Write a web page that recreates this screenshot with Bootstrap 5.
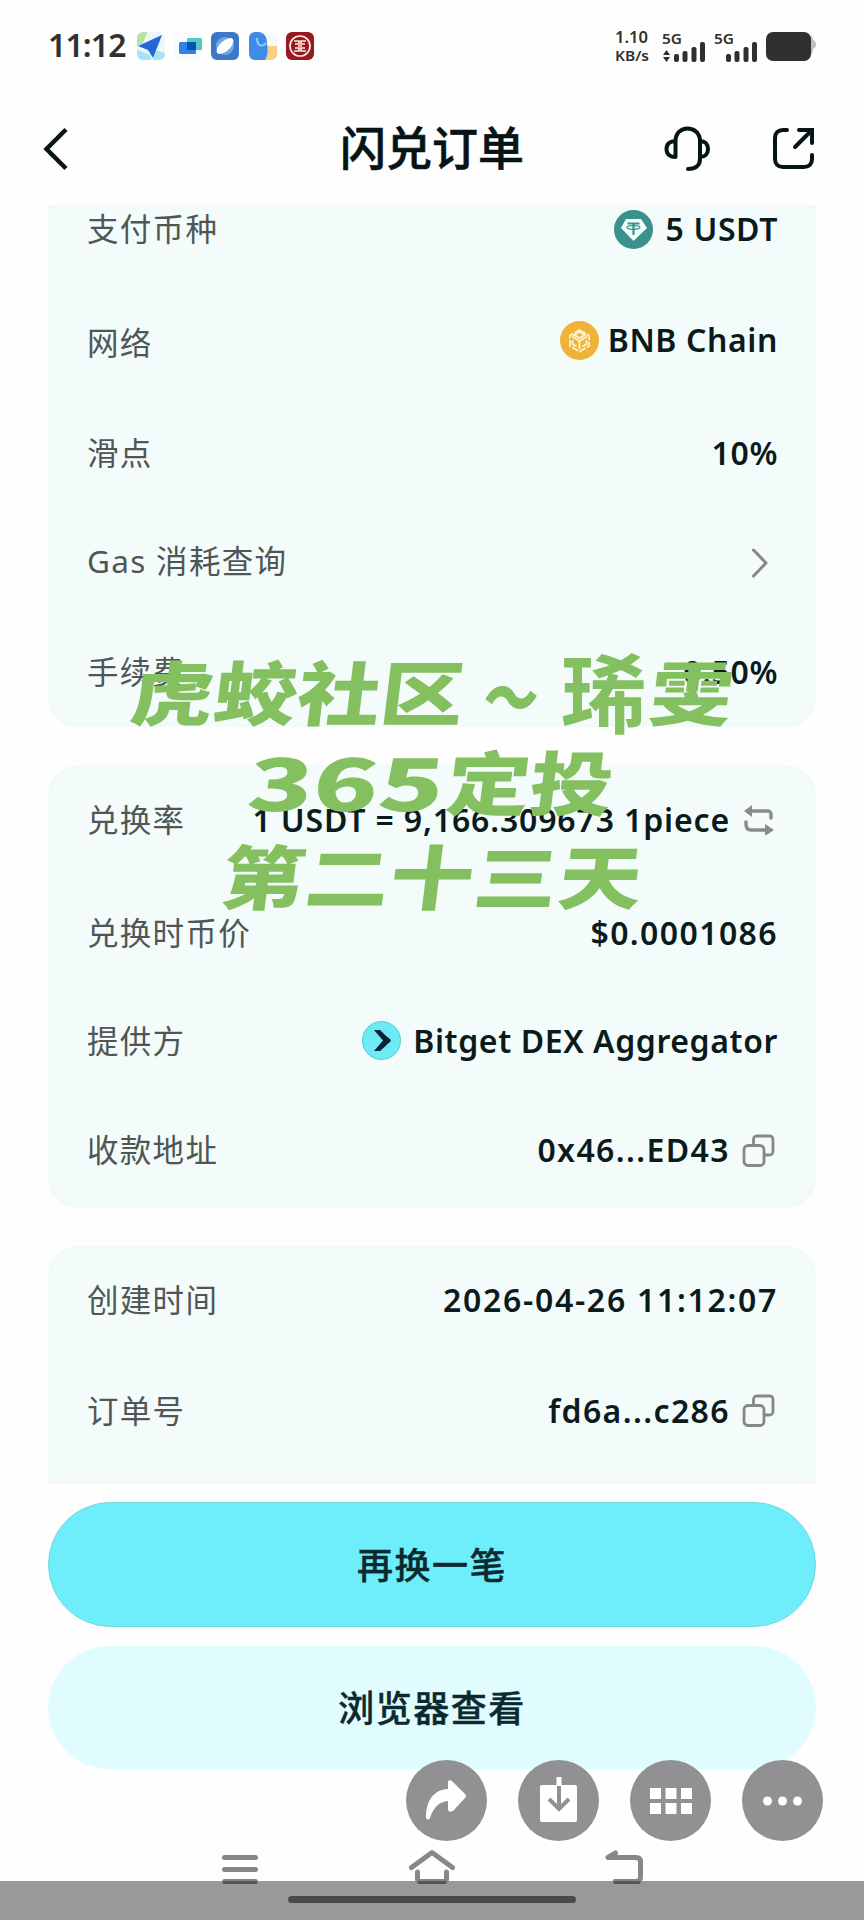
<!DOCTYPE html>
<html lang="zh-CN">
<head>
<meta charset="utf-8">
<meta name="viewport" content="width=device-width, initial-scale=1">
<title>闪兑订单</title>
<link rel="stylesheet" href="https://cdn.jsdelivr.net/npm/bootstrap@5.3.0/dist/css/bootstrap.min.css">
<style>
  body { width: 864px; height: 1920px; background: #fefefe; color: #0b1a1b; font-family: "Noto Sans", "Noto Sans CJK SC", sans-serif; overflow: hidden; }
  svg { display: block; flex-shrink: 0; }
  .status-bar { height: 92px; padding: 0 46px 0 48px; }
  .clock { font-size: 32px; font-weight: 600; color: #303030; line-height: 1; letter-spacing: -.9px; width: 88px; margin-top: -2px; }
  .title-bar { height: 113px; padding: 0 48px 0 43px; }
  .page-title { font: 500 46px/1 "Noto Sans CJK SC", sans-serif; color: #061415; left: 0; right: 0; top: 30px; -webkit-text-stroke: .6px #061415; }
  .panel { margin: 0 48px; background: #f3fcfb; border-radius: 30px; overflow: hidden; box-shadow: inset 0 0 8px #f2f6f8; }
  .panel-a { height: 522px; border-radius: 0 0 30px 30px; }
  .panel-b { height: 443px; margin-top: 38px; }
  .panel-c { height: 238px; margin-top: 38px; border-radius: 30px 30px 0 0; }
  .item { flex: none; padding: 0 38px 0 39px; }
  .h-102 { height: 102px; } .h-108 { height: 108px; } .h-109 { height: 109px; } .h-110 { height: 110px; }
  .h-111 { height: 111px; } .h-112 { height: 112px; } .h-114 { height: 114px; } .h-115 { height: 115px; }
  .name { font-size: 31.5px; line-height: 1; letter-spacing: 1.3px; color: #4f5655; margin-top: -1px; }
  .value { font-size: 32px; font-weight: 600; line-height: 1; letter-spacing: .6px; white-space: nowrap; margin-top: -1px; }
  .ls-date { letter-spacing: 1.7px; }
  .ls-wide { letter-spacing: 1.4px; }
  .ls-rate { letter-spacing: .85px; }
  .act { height: 125px; margin: 0 48px; border-radius: 63px; font: 500 36px/1 "Noto Sans CJK SC", sans-serif; letter-spacing: 1.5px; color: #0b2a30; padding: 0 0 4px; -webkit-text-stroke: .4px #0b2a30; }
  .act-main { margin-top: 18px; background: #6eeefa; border: 1px solid #70d6de; }
  .act-sub { margin-top: 19px; background: #e1fcff; border: 0; height: 123px; }
  .float-tools { left: 406px; top: 1760px; gap: 31px; }
  .overlay { left: 0; top: 0; pointer-events: none; }
  .gesture { height: 39px; background: #999; padding-top: 15px; }
  .gesture div { width: 288px; height: 7px; border-radius: 4px; background: #4a4a4a; }
</style>
</head>
<body class="position-relative d-flex flex-column">

<header class="status-bar d-flex align-items-center">
  <span class="clock">11:12</span>
  <svg width="180" height="30" viewBox="0 0 180 30">
    <defs><clipPath id="ca"><rect x="1" y="1" width="28" height="28" rx="6"/></clipPath><clipPath id="cb"><rect x="113" y="1" width="28" height="28" rx="6"/></clipPath></defs>
    <g clip-path="url(#ca)"><path fill="#eef6f8" d="M0 0h30v30H0z"/><path fill="#b9e3a0" d="M0 0h12L7 12 0 16z"/><path fill="#a6e3f8" d="M0 18l14 6 2 6H0zM19 19l10 3v8H17z"/><path fill="#2468d8" d="M26 4 2 15l10 4 5 8z"/></g>
    <rect x="38" y="1" width="28" height="28" rx="6" fill="#f9fafb"/><rect x="51" y="7" width="15" height="12" rx="1.500" fill="#53c8c4"/><rect x="43" y="11" width="17" height="12" rx="1.500" fill="#2f83e8"/><rect x="51" y="11" width="9" height="8" fill="#0d51b0"/>
    <rect x="75" y="1" width="28" height="28" rx="6" fill="#3d78c8"/><circle cx="89" cy="15" r="9" fill="#70a9e4"/><ellipse cx="89" cy="15" rx="10.500" ry="5" transform="rotate(-42 89 15)" fill="#fff"/>
    <g clip-path="url(#cb)"><path fill="#f7f8f8" d="M113 0h30v30h-30z"/><path fill="#f5cf88" d="M129 15h12v14h-12z"/><path fill="#3d8ce6" d="M113 1h9c6 0 9 5 9 11 1 7 1 12-2 17h-16z"/><path fill="none" stroke="#8fd0f8" stroke-width="2" d="M121 7c0 9 6 9 9 5"/></g>
    <rect x="150" y="1" width="28" height="28" rx="6" fill="#981820"/><g fill="none" stroke="#ffe8e4" stroke-width="1.700"><circle cx="164" cy="15" r="10"/><path d="M158 10h5v3h-4m11-3h-5v3h4M158 20h5v-3h-4m11 3h-5v-3h4M162 15h4"/></g>
  </svg>
  <svg class="ms-auto" width="205" height="40" viewBox="0 -3 205 40" fill="#303030" font-family="Noto Sans" font-weight="600">
    <text x="2" y="14" font-size="16" textLength="33" lengthAdjust="spacingAndGlyphs">1.10</text>
    <text x="2" y="32" font-size="14" textLength="34" lengthAdjust="spacingAndGlyphs">KB/s</text>
    <text x="49" y="15" font-size="14" textLength="20" lengthAdjust="spacingAndGlyphs">5G</text>
    <text x="101" y="15" font-size="14" textLength="20" lengthAdjust="spacingAndGlyphs">5G</text>
    <path d="M50 26l3.500-5 3.500 5zM50 28h7l-3.500 5z"/>
    <rect x="61" y="25" width="5" height="8" rx="2"/><rect x="69.500" y="22" width="5" height="11" rx="2"/><rect x="78.500" y="18" width="5" height="15" rx="2"/><rect x="87" y="13" width="5" height="20" rx="2"/>
    <rect x="113" y="25" width="5" height="8" rx="2"/><rect x="121.500" y="22" width="5" height="11" rx="2"/><rect x="130.500" y="18" width="5" height="15" rx="2"/><rect x="139" y="13" width="5" height="20" rx="2"/>
    <path fill="#bdbdbd" d="M194 6c5 0 6 3 6 5 4 1 4 8 0 9 0 4-2 7-6 8z"/><rect x="153" y="3" width="45" height="29" rx="7"/>
  </svg>
</header>

<nav class="title-bar d-flex align-items-center position-relative">
  <svg width="26" height="44" viewBox="0 0 26 44" fill="none" stroke="#061415" stroke-width="4.500"><path d="M23 2.500 3.500 22 23 41.500"/></svg>
  <h1 class="page-title position-absolute text-center m-0">闪兑订单</h1>
  <svg class="ms-auto" width="46" height="46" viewBox="0 0 46 46" fill="none" stroke="#061415" stroke-width="4" stroke-linecap="round"><path d="M11.500 31V15C11.500 7 17 2.500 23.500 2.500S36 7 36 15v18c0 7-5 10-12 10M11.500 31C6 31 2.500 28 2.500 23s3.500-8 9-8M36 15c5 0 8 3 8 8s-3 8-8 8"/></svg>
  <svg width="44" height="44" viewBox="0 0 44 44" fill="none" stroke="#061415" stroke-width="4" style="margin-left:62px"><path stroke-linecap="round" d="M15 3h-4c-5 0-8 3-8 8v21c0 5 3 8 8 8h21c5 0 8-3 8-8v-4"/><path stroke-linecap="round" d="M27 3h13v13M39 4 23 20"/></svg>
</nav>

<main class="flex-grow-1">
  <section class="panel panel-a d-flex flex-column justify-content-end">
    <div class="item h-115 d-flex align-items-center justify-content-between"><span class="name">支付币种</span>
      <span class="value d-flex align-items-center"><svg width="39" height="39" viewBox="0 0 39 39" style="margin-right:13px"><circle cx="19.500" cy="19.500" r="19.500" fill="#3b918c"/><path fill="#f2fffd" d="M12 9h15l6 9-13.500 13L7 18z"/><path fill="none" stroke="#3b918c" stroke-width="2.200" d="M13.500 13.500h12M19.500 13v12"/><ellipse cx="19.500" cy="17.500" rx="6.500" ry="1.800" fill="none" stroke="#3b918c" stroke-width="1.300"/></svg>5 USDT</span></div>
    <div class="item h-112 d-flex align-items-center justify-content-between"><span class="name">网络</span>
      <span class="value d-flex align-items-center" style="margin-top:-6px"><svg width="39" height="39" viewBox="0 0 39 39" style="margin-right:9px"><circle cx="19.500" cy="19.500" r="19.500" fill="#efb437"/><g fill="none" stroke="#fff5d5" stroke-width="1.700"><path d="M19.500 9 29 14.500v10.500L19.500 30.500 10 25V14.500z" stroke-dasharray="7 1.500"/><path d="m12 15.500 7.500 4.500 7.500-4.500M19.500 20v8M14 14l5.500-3 5.500 3-5.500 3zM12.500 19v4l4 2.500M26.500 19v4l-4 2.500"/></g></svg>BNB Chain</span></div>
    <div class="item h-109 d-flex align-items-center justify-content-between"><span class="name">滑点</span><span class="value">10%</span></div>
    <div class="item h-109 d-flex align-items-center justify-content-between"><span class="name" style="margin-top:-4px">Gas 消耗查询</span>
      <svg width="26" height="30" viewBox="0 0 26 30" fill="none" stroke="#858888" stroke-width="3" stroke-linecap="round" stroke-linejoin="round"><path d="M1.500 2 14 15 1.500 28"/></svg></div>
    <div class="item h-110 d-flex align-items-center justify-content-between"><span class="name">手续费</span><span class="value">0.50%</span></div>
  </section>

  <section class="panel panel-b d-flex flex-column">
    <div class="item h-111 d-flex align-items-center justify-content-between"><span class="name">兑换率</span>
      <span class="value ls-rate d-flex align-items-center">1 USDT = 9,166.309673 1piece<svg width="30" height="30" viewBox="0 0 30 30" style="margin:0 4px 0 14px"><g fill="none" stroke="#888c8c" stroke-width="3.500" stroke-linecap="round"><path d="M5 6h18c3 0 4 1 4 4V13M2 17v2c0 4 2 6 5 6h18"/></g><path fill="#888c8c" d="M8 0v12L0 6zM21 19v12l9-6z"/></svg></span></div>
    <div class="item h-115 d-flex align-items-center justify-content-between"><span class="name">兑换时币价</span><span class="value ls-wide">$0.0001086</span></div>
    <div class="item h-102 d-flex align-items-center justify-content-between"><span class="name" style="margin-top:-3px">提供方</span>
      <span class="value d-flex align-items-center" style="margin-top:-3px"><svg width="39" height="39" viewBox="0 0 39 39" style="margin-right:12px"><circle cx="19.500" cy="19.500" r="19" fill="#6eeaf5" stroke="#56cbd6"/><path fill="#08223a" d="M12 9h6c4 4 7 7 10 9 1 1 1 2 0 3-3 2-6 6-10 9h-6l9-10.500z"/></svg>Bitget DEX Aggregator</span></div>
    <div class="item h-115 d-flex align-items-center justify-content-between"><span class="name">收款地址</span>
      <span class="value ls-wide d-flex align-items-center">0x46...ED43<svg width="33" height="33" viewBox="0 0 33 33" fill="none" stroke="#858888" stroke-width="2.800" style="margin:0 3px 0 12px"><path d="M11.500 11V6c0-3 1-4 4-4H27c3 0 4 1 4 4v11c0 3-1 4-4 4h-4"/><rect x="2" y="11.500" width="20" height="20" rx="4"/></svg></span></div>
  </section>

  <section class="panel panel-c d-flex flex-column">
    <div class="item h-108 d-flex align-items-center justify-content-between"><span class="name">创建时间</span><span class="value ls-date">2026-04-26 11:12:07</span></div>
    <div class="item h-114 d-flex align-items-center justify-content-between"><span class="name">订单号</span>
      <span class="value ls-wide d-flex align-items-center">fd6a...c286<svg width="33" height="33" viewBox="0 0 33 33" fill="none" stroke="#858888" stroke-width="2.800" style="margin:0 3px 0 12px"><path d="M11.500 11V6c0-3 1-4 4-4H27c3 0 4 1 4 4v11c0 3-1 4-4 4h-4"/><rect x="2" y="11.500" width="20" height="20" rx="4"/></svg></span></div>
  </section>

  <div class="d-flex flex-column">
    <button class="btn act act-main">再换一笔</button>
    <button class="btn act act-sub">浏览器查看</button>
  </div>
</main>

<footer class="gesture d-flex justify-content-center"><div></div></footer>

<!-- system navigation keys -->
<svg class="position-absolute overlay" width="864" height="1920" viewBox="0 0 864 1920">
  <g fill="none" stroke="#88868a" stroke-width="5" stroke-linecap="round" stroke-linejoin="round">
    <path d="M224.500 1857.500h31M224.500 1869.500h31M224.500 1881.500h31"/>
    <path d="M411.500 1867.500 432 1852.500 452.500 1867.500M417.500 1872v7q0 2.500 3 2.500h23q3 0 3-2.500v-7"/>
    <path d="M615.500 1853 608 1857.500h28q4.500 0 4.500 4v15.500q0 4.500-4 4.500H615"/>
  </g>
  <path stroke="#55555a" stroke-width="3" stroke-linecap="round" d="M224 1882.500h32M419 1882.500h26M615 1882.500h24"/>
</svg>

<div class="float-tools position-absolute d-flex">
  <svg width="81" height="81" viewBox="0 0 81 81"><circle cx="40.500" cy="40.500" r="40.500" fill="#919093"/><path fill="#fff" d="M42 21q3-2 5 1l12 12q2 2 0 4L47 51q-4 2-5-1V41q-13 1-18 17-2 3-4 0c0-17 7-28 22-29z"/></svg>
  <svg width="81" height="81" viewBox="0 0 81 81"><circle cx="40.500" cy="40.500" r="40.500" fill="#919093"/><rect x="22" y="25" width="37" height="37" rx="2" fill="#fff"/><path fill="#fff" d="M38.500 17h5v9h-5z"/><path fill="none" stroke="#919093" stroke-width="4" d="M41 26v23M31 39l10 10 10-10"/></svg>
  <svg width="81" height="81" viewBox="0 0 81 81"><circle cx="40.500" cy="40.500" r="40.500" fill="#919093"/><path fill="#fff" d="M20 28h11v11H20zM35.500 28h11v11h-11zM51 28h11v11H51zM20 43h11v11H20zM35.500 43h11v11h-11zM51 43h11v11H51z"/></svg>
  <svg width="81" height="81" viewBox="0 0 81 81"><circle cx="40.500" cy="40.500" r="40.500" fill="#919093"/><g fill="#fff"><circle cx="25.500" cy="41" r="4.500"/><circle cx="40.500" cy="41" r="4.500"/><circle cx="55.500" cy="41" r="4.500"/></g></svg>
</div>

<!-- caption laid over the order details -->
<svg class="position-absolute overlay" width="864" height="1920" viewBox="0 0 864 1920" fill="#84bf60" font-family="'Noto Sans CJK SC', sans-serif" font-weight="900">
  <g transform="translate(128 720) skewX(-7) scale(1 .84)" font-size="83">
    <text x="0" y="0" textLength="333" lengthAdjust="spacing">虎蛟社区</text>
    <text transform="translate(353 5) scale(.66 1)" x="0" y="0">～</text>
    <text x="519" y="0">雯</text>
  </g>
  <text x="561" y="727" font-size="86" font-weight="700">琋</text>
  <g transform="translate(245 811) skewX(-7)">
    <text x="0" y="0" font-size="71" textLength="196" lengthAdjust="spacingAndGlyphs">365</text>
    <text transform="scale(1 .84)" x="199" y="-1" font-size="83">定投</text>
  </g>
  <g transform="translate(219 904) skewX(-7) scale(1 .84)" font-size="83">
    <text x="0" y="0" textLength="420" lengthAdjust="spacing">第二十三天</text>
  </g>
</svg>

<script src="https://cdn.jsdelivr.net/npm/bootstrap@5.3.0/dist/js/bootstrap.bundle.min.js"></script>
</body>
</html>
